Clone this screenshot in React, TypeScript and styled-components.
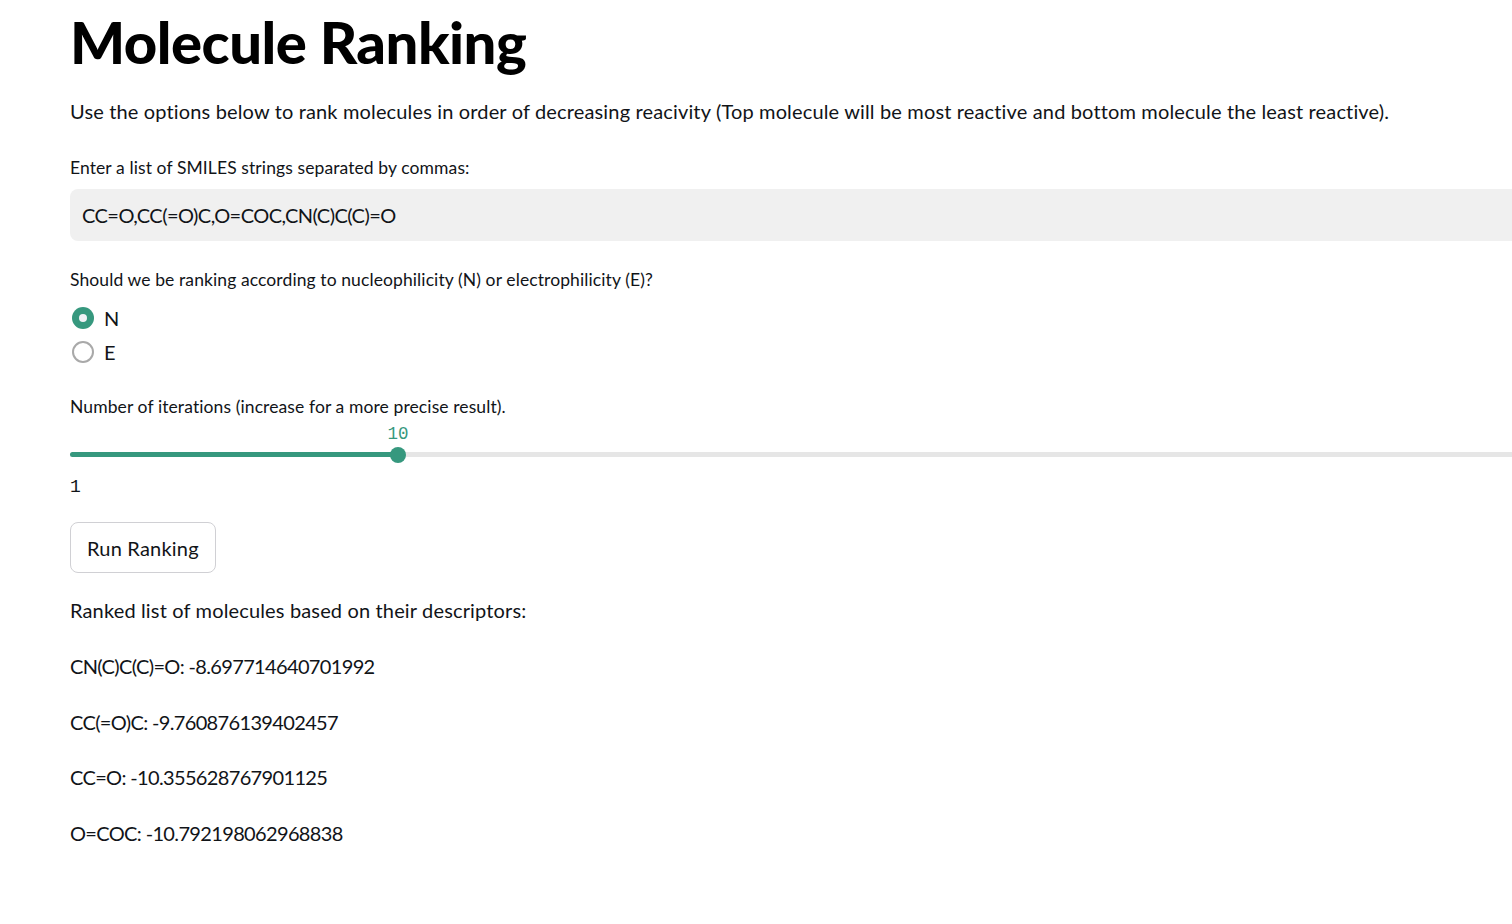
import React, { useState } from "react";
import styled, { createGlobalStyle } from "styled-components";

const GREEN = "#36987e";
const TEXT = "#111418";

const Global = createGlobalStyle`
  html, body { margin: 0; padding: 0; background: #ffffff; overflow: hidden; }
  body { font-family: Lato, "Noto Sans", sans-serif; color: ${TEXT}; }
  * { box-sizing: border-box; }
`;

const Main = styled.main`
  width: 1600px;
  padding: 0 0 0 70px;
  display: flex;
  flex-direction: column;
`;

const Title = styled.h1`
  margin: 8px 0 0;
  font-family: Lato, sans-serif;
  font-weight: 900;
  font-size: 58px;
  line-height: 68px;
  letter-spacing: -0.5px;
  color: #000;
`;

const Para = styled.p<{ $mt?: number; $ls?: number }>`
  margin: ${(p) => p.$mt ?? 0}px 0 0;
  font-size: 20px;
  line-height: 30px;
  letter-spacing: ${(p) => p.$ls ?? 0.15}px;
`;

const Label = styled.div<{ $mt: number }>`
  margin-top: ${(p) => p.$mt}px;
  font-size: 17.5px;
  line-height: 24px;
  letter-spacing: 0.1px;
`;

const Input = styled.input`
  margin-top: 9px;
  width: 100%;
  height: 52px;
  border: none;
  outline: none;
  border-radius: 8px;
  background: #f0f0f0;
  padding: 0 12px;
  font-family: Lato, sans-serif;
  font-size: 20px;
  letter-spacing: -0.55px;
  color: ${TEXT};
`;

const RadioGroup = styled.div`
  margin-top: 14px;
  display: flex;
  flex-direction: column;
  gap: 10px;
`;

const RadioRow = styled.label`
  display: flex;
  align-items: center;
  gap: 10px;
  height: 24px;
  font-size: 20px;
  cursor: pointer;
`;

const Circle = styled.span<{ $on: boolean }>`
  width: 22px;
  height: 22px;
  margin-left: 2px;
  border-radius: 50%;
  display: flex;
  align-items: center;
  justify-content: center;
  background: ${(p) => (p.$on ? GREEN : "#fff")};
  border: ${(p) => (p.$on ? "none" : "2px solid #a9a9a9")};
  &::after {
    content: "";
    width: 8px;
    height: 8px;
    border-radius: 50%;
    background: #f0f2f6;
    display: ${(p) => (p.$on ? "block" : "none")};
  }
`;

const SliderWrap = styled.div`
  margin-top: 3px;
  display: flex;
  flex-direction: column;
`;

const ValueRow = styled.div`
  position: relative;
  height: 30px;
`;

const ThumbValue = styled.span`
  position: absolute;
  top: 0;
  transform: translateX(-50%);
  font-family: "Liberation Mono", "DejaVu Sans Mono", monospace;
  font-size: 17.5px;
  line-height: 24px;
  color: ${GREEN};
`;

const Track = styled.div`
  position: relative;
  height: 5px;
  border-radius: 3px;
  background: #e6e6e6;
`;

const Fill = styled.div`
  position: absolute;
  left: 0;
  top: 0;
  bottom: 0;
  border-radius: 3px;
  background: ${GREEN};
`;

const Thumb = styled.div`
  position: absolute;
  top: 50%;
  width: 16px;
  height: 16px;
  border-radius: 50%;
  background: ${GREEN};
  transform: translate(-50%, -50%);
`;

const MinLabel = styled.div`
  margin-top: 18px;
  font-family: "Liberation Mono", "DejaVu Sans Mono", monospace;
  font-size: 18px;
  line-height: 24px;
  color: ${TEXT};
`;

const Button = styled.button`
  margin-top: 23px;
  align-self: flex-start;
  height: 51px;
  padding: 0 16px;
  border: 1px solid #d0d0d4;
  border-radius: 8px;
  background: #fff;
  font-family: Lato, sans-serif;
  font-size: 20px;
  letter-spacing: 0.2px;
  color: ${TEXT};
  cursor: pointer;
`;

const ResultList = styled.div`
  margin-top: 26px;
  display: flex;
  flex-direction: column;
  gap: 25.5px;
`;

const results = [
  "CN(C)C(C)=O: -8.697714640701992",
  "CC(=O)C: -9.760876139402457",
  "CC=O: -10.355628767901125",
  "O=COC: -10.792198062968838",
];

export default function App() {
  const [mode, setMode] = useState("N");
  const [smiles, setSmiles] = useState("CC=O,CC(=O)C,O=COC,CN(C)C(C)=O");
  const pos = 328;
  return (
    <>
      <Global />
      <Main>
        <Title>Molecule Ranking</Title>
        <Para $mt={20}>
          Use the options below to rank molecules in order of decreasing reacivity (Top molecule will be most reactive and bottom molecule the least reactive).
        </Para>
        <Label $mt={30}>Enter a list of SMILES strings separated by commas:</Label>
        <Input value={smiles} onChange={(e) => setSmiles(e.target.value)} />
        <Label $mt={27}>Should we be ranking according to nucleophilicity (N) or electrophilicity (E)?</Label>
        <RadioGroup>
          {["N", "E"].map((m) => (
            <RadioRow key={m} onClick={() => setMode(m)}>
              <Circle $on={mode === m} />
              {m}
            </RadioRow>
          ))}
        </RadioGroup>
        <Label $mt={31}>Number of iterations (increase for a more precise result).</Label>
        <SliderWrap>
          <ValueRow>
            <ThumbValue style={{ left: pos }}>10</ThumbValue>
          </ValueRow>
          <Track>
            <Fill style={{ width: pos }} />
            <Thumb style={{ left: pos }} />
          </Track>
        </SliderWrap>
        <MinLabel>1</MinLabel>
        <Button>Run Ranking</Button>
        <Para $mt={22}>Ranked list of molecules based on their descriptors:</Para>
        <ResultList>
          {results.map((r) => (
            <Para key={r} $ls={-0.65}>{r}</Para>
          ))}
        </ResultList>
      </Main>
    </>
  );
}
